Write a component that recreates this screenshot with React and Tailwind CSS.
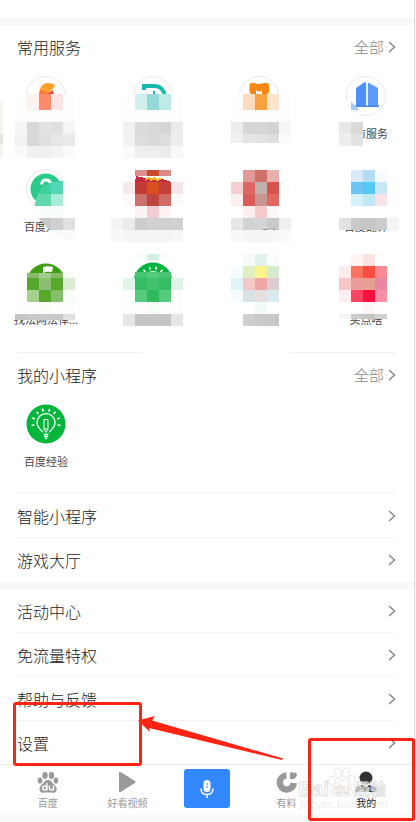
import React from "react";

const font = "font-['Noto_Sans_CJK_SC',sans-serif]";

function Chevron() {
  return (
    <svg width="8" height="14" viewBox="0 0 8 14" fill="none" stroke="#8c8c8c" strokeWidth="1.6" aria-hidden="true">
      <path d="M1 2l5.5 5L1 12" />
    </svg>
  );
}

const rays = [-100, -70, -40, -14, 14, 40, 70, 100];

function BulbArt() {
  return (
    <g fill="none" stroke="#fff" strokeWidth="1.3">
      <circle cx="20" cy="20" r="19.5" fill="#04b53c" stroke="none" />
      {rays.map((a) => (
        <path key={a} d="M20 7.3V4.3" strokeWidth="1.6" transform={`rotate(${a} 20 19)`} />
      ))}
      <path d="M16.8 28.3C16 26.5 11 24 11 18.6a9 9 0 0 1 18 0c0 5.4-5 7.9-5.8 9.7" />
      <path d="M18 25V15.5h4V25l-2 3.5zM18 25h4" strokeWidth="1" />
      <path d="M17.5 30.500h5M18 32.500h4M19 34.500h2" strokeWidth="1.400" />
    </g>
  );
}

const ring = <circle cx="20" cy="20" r="19.500" fill="#fff" stroke="#e8e8e8" />;

const art = {
  flame: (
    <g>
      {ring}
      <path d="M13 20c0-8 3-13 9-13 4 0 6 1 7 2.500-1.500 3.500-5 4.500-5 8.500v2z" fill="#fda12f" />
      <path d="M13 20c0-3 1-5 2-6l8 3v3z" fill="#f97a38" />
      <path d="M22 17.500l5-3.500 1 5h-6z" fill="#e04f48" />
    </g>
  ),
  dee: (
    <g>
      {ring}
      <path d="M11 14V10h10c6 0 10 4 11 10" fill="none" stroke="#14bab0" strokeWidth="4" />
      <path d="M17 18h3v-3h2v3h3v2h-8z" fill="#14bab0" />
    </g>
  ),
  bear: (
    <g>
      {ring}
      <path d="M10.500 9q0-2 2-2h3q4.500 2 9 0h3q2.500 0 2.500 2v7l-1 2v4H12v-4l-1.500-2z" fill="#fa8614" />
      <path d="M17 14l1.500 1.500h3L23 14v4h-6z" fill="#fff" />
    </g>
  ),
  city: (
    <g>
      {ring}
      <path d="M10 12l8-5.500h2V30H10z" fill="#4f91fb" />
      <path d="M22 6.500l10 5.500v18H22z" fill="#5e9af8" />
      <path d="M9 29.500h24V31H9z" fill="#4384ef" />
      <path d="M21 7v21" stroke="#dceaff" strokeWidth="1.500" />
    </g>
  ),
  know: (
    <g>
      {ring}
      <circle cx="20" cy="20" r="15.500" fill="#2cca89" />
      <path d="M15.500 15.500q1-5 5-4.500 4 .5 4 4" fill="none" stroke="#fff" strokeWidth="3" />
    </g>
  ),
  law: (
    <g>
      <circle cx="20" cy="21" r="19.500" fill="#3f9e12" />
      <path d="M17 5q5-1.500 10 0l-1 5q-5-1-9 1z" fill="#fff" />
    </g>
  ),
  bulb: <BulbArt />,
  blank: null,
};

const services = [
  ["flame", ""], ["dee", ""], ["bear", ""], ["city", "城市服务"],
  ["know", "百度知道"], ["blank", ""], ["blank", ""], ["blank", "百度翻译"],
  ["law", "找法网法律..."], ["bulb", ""], ["blank", ""], ["blank", "买点啥"],
];

function Tile({ icon, label }) {
  return (
    <a href="#" aria-label={label ? undefined : "服务"} className="flex w-[60px] flex-col items-center gap-[9px]">
      <svg width="40" height="40" viewBox="0 0 40 40" aria-hidden="true">{art[icon]}</svg>
      <span className="h-4 text-[11px] leading-4 whitespace-nowrap text-[#444]">{label}</span>
    </a>
  );
}

function SectionHeader({ title }) {
  return (
    <div className="flex h-11 items-center justify-between pr-[18px] pl-[17px]">
      <h2 className="text-[16px] leading-6 font-light text-[#222]">{title}</h2>
      <a href="#" className="flex items-center gap-1 text-[15px] leading-6 font-light text-[#888]">
        全部
        <Chevron />
      </a>
    </div>
  );
}

// Mosaic strips: x, y, height, colours of 12px wide cells
const W = "#fdfdfd";
const mosaic = [
  [15, 94, 16, [W, "#faf3ef", "#fb8b6b", "#fbe4e4", W]],
  [15, 110, 12, [W, W, W, W, W]],
  [15, 122, 12, ["#f5f5f5", "#d8d8d8", "#e2e2e2", "#dfdfdf", "#f5f5f5"]],
  [15, 134, 12, ["#f2f2f2", "#d8d8d8", "#e0e0e0", "#e6e6e6", "#eaeaea"]],
  [15, 146, 12, ["#fafafa", "#f1f1f1", "#f0f0f0", "#f3f3f3", "#fafafa"]],
  [123, 94, 16, [W, "#d2efee", "#93dad8", "#beebe6", W]],
  [123, 110, 12, [W, W, W, W, W]],
  [123, 122, 12, ["#f1f1f1", "#dcdcdc", "#d9d9d9", "#d5d5d5", "#ebebeb"]],
  [123, 134, 12, ["#f2f2f2", "#dddddd", "#d9d9d9", "#dedede", "#ededed"]],
  [123, 146, 12, ["#fafafa", "#eeeeee", "#eeeeee", "#ebebeb", "#f8f8f8"]],
  [231, 94, 16, [W, "#fcdcbf", "#f8a23f", "#fce4cf", W]],
  [231, 110, 12, [W, W, W, W, W]],
  [231, 122, 12, ["#ececec", "#d6d6d6", "#d6d6d6", "#d3d3d3", "#f6f6f6"]],
  [231, 134, 9, ["#f0f0f0", "#e4e4e4", "#e2e2e2", "#dfdfdf", "#fbfbfb"]],
  [339, 122, 12, ["#e8e8e8", "#d9d9d9"]],
  [339, 134, 12, ["#eeeeee", "#e2e2e2"]],
  [123, 170, 6, ["#fff", "#dc8f8e", "#c94a2c", "#d88a88", "#fff"]],
  [123, 182, 12, ["#f5eaec", "#c23a35", "#da4f20", "#c63e38", "#f6e8ea"]],
  [123, 194, 12, ["#fdfafa", "#cd6f6b", "#c04340", "#cf6a67", "#fdfafb"]],
  [135, 206, 12, ["#fbf2f3", "#f0cdd3", "#fcf3f4"]],
  [111, 218, 12, ["#f4f4f4", "#ececec", "#cdcdcd", "#d0d0d0", "#d0d0d0", "#d1d1d1"]],
  [111, 230, 12, ["#f8f8f8", "#f5f5f5", "#f4f4f4", "#f5f5f5", "#f4f4f4", "#f7f7f7"]],
  [243, 170, 12, ["#e29997", "#cf706a", "#e8b0ae"]],
  [231, 182, 12, ["#f5d0d0", "#dc6663", "#c3b0ae", "#d7534c", W]],
  [231, 194, 12, ["#fbf0f0", "#db5d58", "#c89491", "#e26760"]],
  [243, 206, 12, ["#fbeeee", "#f5caca", "#fdf8f8"]],
  [231, 218, 12, ["#e6e6e6", "#d2d2d2", "#d4d4d4", "#c9c9c9", "#efefef"]],
  [231, 230, 12, ["#f8f8f8", "#f5f5f5", "#f5f5f5", "#f5f5f5", "#fafafa"]],
  [351, 170, 12, ["#d8eaf8", "#b3dcf5", "#f7fafd"]],
  [351, 182, 12, ["#6bc3f6", "#56c9f2", "#c7e7f2"]],
  [351, 194, 12, ["#d2f1f8", "#bfe8f4", "#f8e3e9"]],
  [339, 218, 12, ["#e2e2e2", "#c9c9c9", "#c7c7c7", "#cccccc", "#f4f4f4"]],
  [27, 273, 5, ["#86bc69", "#a0cc8c", "#86ba65", "#f8fbf6"]],
  [15, 278, 12, ["#fefffd", "#56a82d", "#8ac070", "#57a82d", "#dcecd2"]],
  [15, 290, 12, ["#fefffd", "#a6d08e", "#57a82d", "#85be68", "#f8fcf6"]],
  [15, 302, 12, [W, W, "#fbfdf9", W, W]],
  [15, 314, 6, ["#c4c4c4", "#c8c8c8", "#cbcbcb", "#c8c8c8", "#e0e0e0"]],
  [135, 254, 6, ["#f6fcf8", "#d3f1df", "#f8fdfa"]],
  [135, 272, 6, ["#45c371", "#55c87b", "#45c371"]],
  [123, 278, 12, ["#e1f4ea", "#35bd63", "#42c26e", "#35bd63", "#e1f4ea"]],
  [123, 290, 12, [W, "#56cb7d", "#2fba5e", "#56cb7d", W]],
  [123, 302, 12, [W, W, "#f4fcf6", W, W]],
  [123, 314, 12, ["#e6e6e6", "#c5c5c5", "#c5c5c5", "#c5c5c5", "#e6e6e6"]],
  [243, 254, 12, ["#f4fbfa", "#e1f3ec", "#fafdfc"]],
  [231, 266, 12, ["#f4fcfd", "#e0efc0", "#faf58b", "#d6ebd0"]],
  [231, 278, 12, ["#e1f3f8", "#f3c9c7", "#eea7a5", "#ddccd0"]],
  [231, 290, 12, ["#f5fcfd", "#d8e2e5", "#e6dfe0", "#d9ebee"]],
  [255, 302, 12, ["#f0fbfa"]],
  [243, 314, 12, ["#cfcfcf", "#c9c9c9", "#c8c8c8"]],
  [351, 254, 12, ["#fef5f2", "#fbe3df"]],
  [339, 266, 12, ["#feecea", "#fb735f", "#fe4c45", "#f78a93"]],
  [339, 278, 12, ["#f8c6c6", "#ed9c9c", "#e9a094", "#e887a0"]],
  [339, 290, 12, ["#fdeef1", "#fb4463", "#ff1040", "#f98ea4"]],
  [363, 302, 12, ["#fdf5f6"]],
  [339, 314, 5, ["#f4f4f4", "#cccccc", "#c6c6c6", "#d0d0d0"]],
];

function Mosaic() {
  return (
    <svg
      className="pointer-events-none absolute top-0 left-0"
      width="414"
      height="328"
      viewBox="0 25 414 328"
      shapeRendering="crispEdges"
      aria-hidden="true"
    >
      <path d="M0 100h3v57H0z" fill="#f6f6f0" />
      <path d="M0 134h3v11H0z" fill="#e8e8e2" />
      <path d="M339 100h12l8 10v12h-20z" fill="#fff" />
      <path d="M351 101l8 9h-8z" fill="#a9cdf8" />
      <path d="M63 181q-26 3-28 30h40v-30z" fill="#fff" />
      <path d="M63 181v13H37q6-13 26-13z" fill="#3fd1a0" />
      <path d="M51 182h12v12H51z" fill="#52d6b6" />
      <path d="M38 194h13v12H35q0-6 3-12z" fill="#5fd9ac" />
      <path d="M51 194h12v12H51z" fill="#a8ebdb" />
      <path d="M39 206h24v12H39z" fill="#f6fdfb" />
      <path d="M39 218h12v12h-2z" fill="#c8c8c8" />
      <path d="M51 218h12v12H51z" fill="#d0d0d0" />
      <path d="M63 218h12v12H63z" fill="#e0e0e0" />
      <path d="M49 230h26v12q-14-2-26-12z" fill="#fafafa" />
      <path d="M136 176l9 2 17 1 9 3h-36z" fill="#c32a42" />
      <path d="M145 180l4-2 2 2 3-2 3 2 4-1" stroke="#f6b020" strokeWidth="2" fill="none" />
      <path d="M121 302h62v24h-62zM13 302h64v18H13zM24 285h42v20H24zM131 285h44v20h-44z" fill="#fff" />
      {mosaic.map(([x, y, h, colors]) =>
        colors.map((c, i) => <rect key={`${x}-${y}-${i}`} x={x + i * 12} y={y} width="12" height={h} fill={c} />)
      )}
      <path d="M263 229h4M269 228h1M273 229h2" stroke="#888" />
    </svg>
  );
}

function MenuRow({ label, last }) {
  return (
    <li className="pr-[18px] pl-[17px]">
      <a
        href="#"
        className={
          "flex h-11 items-center justify-between text-[16px] leading-6 font-light text-[#222] " +
          (last ? "" : "border-b border-[#f3f3f3]")
        }
      >
        {label}
        <Chevron />
      </a>
    </li>
  );
}

function NavItem({ label, active, children }) {
  return (
    <a href="#" className={"flex flex-col items-center gap-0.5 pt-1 text-[10px] leading-4 " + (active ? "text-[#222]" : "text-[#999]")}>
      <svg width="24" height="24" viewBox="0 0 24 24" aria-hidden="true">{children}</svg>
      {label}
    </a>
  );
}

function Paw() {
  return (
    <g transform="translate(0 2)">
      <g fill="#999">
        <ellipse cx="9" cy="4.500" rx="2.700" ry="3.400" />
        <ellipse cx="15.500" cy="4.500" rx="2.700" ry="3.400" />
        <ellipse cx="4" cy="9.500" rx="2.300" ry="3.100" />
        <ellipse cx="20" cy="9.500" rx="2.300" ry="3.100" />
        <path d="M12 9c3 0 4 2.500 6 4.500s3.500 3.500 2.500 6-3 2.500-5 2H9c-2 .5-4.500.5-5.300-2s.3-4 2.300-6S9 9 12 9z" />
      </g>
      <g fill="none" stroke="#fff" strokeWidth="1.400">
        <circle cx="8.700" cy="17" r="2" />
        <path d="M10.900 12v7.500M13.500 14.500V17q0 2 2 2t2-2v-2.500V19.500" />
      </g>
    </g>
  );
}

export default function App() {
  return (
    <div className={"relative bg-[#f7f7f7] pr-px " + font}>
      <div className="border-r border-[#d9d9d6] bg-white">
        <div className="h-[18px]" />
        <div className="h-[7px] bg-[#f7f7f7]" />

        <section className="relative">
          <SectionHeader title="常用服务" />
          <div className="grid grid-cols-[repeat(4,60px)] justify-between gap-y-7 pt-[7px] pr-[18px] pb-[25px] pl-4">
            {services.map(([icon, label], i) => (
              <Tile key={i} icon={icon} label={label} />
            ))}
          </div>
          <Mosaic />
        </section>

        <div className="flex pr-[18px] pl-[17px]">
          <div className="h-px w-[124px] bg-[#f0f0f0]" />
          <div className="h-px flex-1 bg-[#fdfdfd]" />
          <div className="h-px w-[106px] bg-[#f0f0f0]" />
        </div>

        <section>
          <SectionHeader title="我的小程序" />
          <div className="flex pt-[7px] pb-[23px] pl-4">
            <Tile icon="bulb" label="百度经验" />
          </div>
          <div className="mr-[18px] ml-[17px] h-0.5 bg-[#f7f7f7]" />
          <ul>
            <MenuRow label="智能小程序" />
            <MenuRow label="游戏大厅" last />
          </ul>
        </section>

        <div className="h-[7px] bg-[#f7f7f7]" />

        <ul>
          <MenuRow label="活动中心" />
          <MenuRow label="免流量特权" />
          <MenuRow label="帮助与反馈" />
          <MenuRow label="设置" last />
        </ul>

        <nav className="-mt-px grid h-[50px] grid-cols-5 border-t border-[#ebebeb] px-2">
          <NavItem label="百度"><Paw /></NavItem>
          <NavItem label="好看视频">
            <path d="M4 4q0-1.500 1.500-1l14.500 9q1.500 1 0 2l-14.500 9Q4 23.500 4 22z" fill="#999" />
          </NavItem>
          <div className="flex justify-center pt-1">
            <button type="button" aria-label="语音" className="flex h-[39px] w-[46px] items-center justify-center rounded-[3px] bg-[#3388ff]">
              <svg width="16" height="22" viewBox="0 0 16 22" fill="none" stroke="#fff" strokeWidth="1.500" aria-hidden="true">
                <rect x="4.500" y="2" width="7" height="12" rx="3.500" fill="#fff" stroke="none" />
                <path d="M2 10.500q0 6 6 6t6-6M8 16.500V20" />
                <path d="M7 6h2M7 9h2" stroke="#3388ff" strokeWidth="1" />
              </svg>
            </button>
          </div>
          <NavItem label="有料">
            <path d="M11.500 6.500a7 7 0 1 0 7.300 7.500" fill="none" stroke="#999" strokeWidth="6.500" />
            <path d="M15 10V5q0-2.500 2.300-2 1 .2 1.200 1.500 1.200-1.500 2.800-.5Q23 6 21 8l-2 2z" fill="#999" />
          </NavItem>
          <NavItem label="我的" active>
            <circle cx="12" cy="9" r="6.500" fill="#333" />
            <path d="M1.500 23v-2.500q0-2.500 3-3l4-1.500 3.500 2 3.500-2 4 1.500q3 .5 3 3V23z" fill="#333" />
          </NavItem>
        </nav>
        <div className="h-2 bg-[#fafafa]" />
      </div>

      <svg className="pointer-events-none absolute bottom-0 left-0" width="416" height="132" viewBox="0 690 416 132">
        <g fill="#fff" fillOpacity="0.500" stroke="#dcdcdc" strokeWidth="0.800">
          <ellipse cx="338" cy="773" rx="3.500" ry="5" />
          <ellipse cx="346" cy="773" rx="3.500" ry="5" />
          <ellipse cx="332" cy="781" rx="3" ry="4.500" />
          <ellipse cx="352" cy="780" rx="3" ry="4.500" />
          <path d="M342 780c4 0 5 4 8 7s4 9-2 9h-12c-6 0-5-6-2-9s4-7 8-7z" />
          <text x="298" y="796" fontSize="20" fontWeight="700" fontFamily="Liberation Sans, sans-serif">Bai</text>
          <text x="334" y="794" fontSize="13" fontWeight="700" fontFamily="Liberation Sans, sans-serif">du</text>
          <text x="354" y="795" fontSize="16" fontWeight="700" fontFamily="Noto Sans CJK SC, sans-serif">经验</text>
        </g>
        <text x="299" y="808" fontSize="11" fill="#ccc" fillOpacity="0.350" fontFamily="Liberation Sans, sans-serif">jingyan.baidu.com</text>
        <g fill="none" stroke="#fd2413" strokeWidth="3">
          <rect x="14.500" y="703.500" width="126" height="61" rx="1.500" />
          <rect x="309.500" y="739.500" width="104" height="80" rx="1.500" />
        </g>
        <path d="M138 720.500L155 716l-3 4.500L283 758.500l-1 1.500L149 728l1 4z" fill="#fd2413" />
      </svg>
    </div>
  );
}
